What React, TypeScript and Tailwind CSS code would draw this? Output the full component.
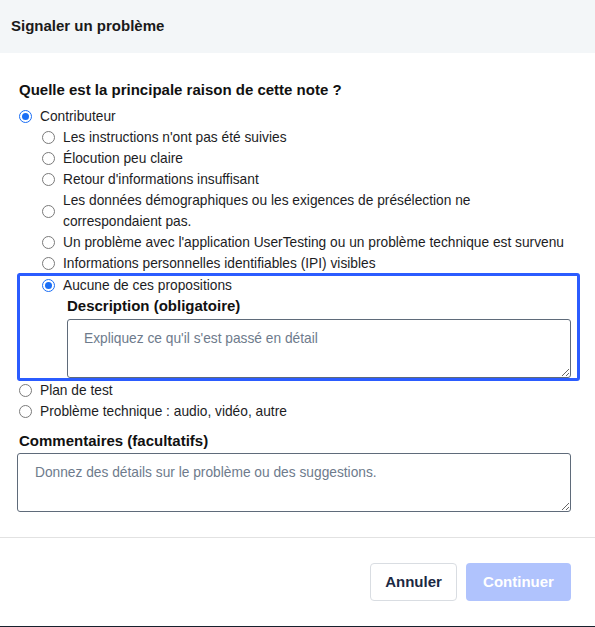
import React from "react";

const font = { fontFamily: '"Liberation Sans", Arial, sans-serif' };

function Radio({ checked }: { checked?: boolean }) {
  return checked ? (
    <span className="w-[13px] h-[13px] rounded-full border-[1.5px] border-[#1a6ef5] flex items-center justify-center shrink-0 bg-white">
      <span className="w-[7px] h-[7px] rounded-full bg-[#1a6ef5]" />
    </span>
  ) : (
    <span className="w-[13px] h-[13px] rounded-full border border-[#7a7a7a] shrink-0 bg-white" />
  );
}

function Option({ label, checked, pad }: { label: React.ReactNode; checked?: boolean; pad: string }) {
  return (
    <label className={`flex items-center gap-[8px] min-h-[21px] leading-[21px] text-[13.75px] text-[#1d1d1f] ${pad}`}>
      <Radio checked={checked} />
      <span>{label}</span>
    </label>
  );
}

const subOptions = [
  "Les instructions n'ont pas été suivies",
  "Élocution peu claire",
  "Retour d'informations insuffisant",
];

export default function App() {
  return (
    <div className="w-[595px] h-[627px] bg-white flex flex-col border-b border-[#17202c]" style={font}>
      <div className="h-[53px] bg-[#f3f6f8] flex items-center px-[11px] shrink-0">
        <h2 className="text-[15px] font-bold text-[#1a1a1a]">Signaler un problème</h2>
      </div>

      <div className="flex-1 pl-[12px] pr-[24px] pt-[27px]">
        <h3 className="pl-[7px] text-[15px] font-bold text-[#111] leading-[20px]">
          Quelle est la principale raison de cette note ?
        </h3>
        <div className="mt-[6px] flex flex-col">
          <Option label="Contributeur" checked pad="pl-[7px]" />
          {subOptions.map((o) => (
            <Option key={o} label={o} pad="pl-[30px]" />
          ))}
          <Option
            pad="pl-[30px]"
            label={
              <>
                Les données démographiques ou les exigences de présélection ne
                <br />
                correspondaient pas.
              </>
            }
          />
          <Option label="Un problème avec l'application UserTesting ou un problème technique est survenu" pad="pl-[30px]" />
          <Option label="Informations personnelles identifiables (IPI) visibles" pad="pl-[30px]" />

          <div className="ml-[6px] w-[561px] outline-[3px] outline-[#2b5cff] outline-offset-[-2px] rounded-[2px] pt-[1px] pr-[8px] pb-[2px]">
            <Option label="Aucune de ces propositions" checked pad="pl-[24px]" />
            <div className="pl-[49px]">
              <div className="text-[15px] font-bold text-[#111] leading-[20px]">Description (obligatoire)</div>
              <textarea
                placeholder="Expliquez ce qu'il s'est passé en détail"
                className="mt-[3px] block w-full h-[59px] border border-[#5f6b7a] rounded-[3px] px-[16px] py-[9px] text-[13.75px] text-[#1d1d1f] placeholder:text-[#6e7b8c] outline-none resize-y"
              />
            </div>
          </div>

          <Option label="Plan de test" pad="pl-[7px]" />
          <Option label="Problème technique : audio, vidéo, autre" pad="pl-[7px]" />
        </div>

        <div className="pl-[7px] mt-[9px] text-[15px] font-bold text-[#111] leading-[20px]">Commentaires (facultatifs)</div>
        <textarea
          placeholder="Donnez des détails sur le problème ou des suggestions."
          className="ml-[5px] mt-[2px] block w-[554px] h-[59px] border border-[#5f6b7a] rounded-[3px] px-[17px] py-[9px] text-[13.75px] text-[#1d1d1f] placeholder:text-[#6e7b8c] outline-none resize-y"
        />
      </div>

      <div className="h-[89px] border-t border-[#e2e2e2] flex items-start justify-end gap-[9px] pt-[25px] pr-[24px] shrink-0">
        <button className="h-[38px] w-[87px] rounded-[4px] border border-[#d9dde2] bg-white text-[15px] font-bold text-[#1b2943]">
          Annuler
        </button>
        <button className="h-[38px] w-[105px] rounded-[4px] bg-[#b0c3fd] text-[15px] font-bold text-white">
          Continuer
        </button>
      </div>
    </div>
  );
}
